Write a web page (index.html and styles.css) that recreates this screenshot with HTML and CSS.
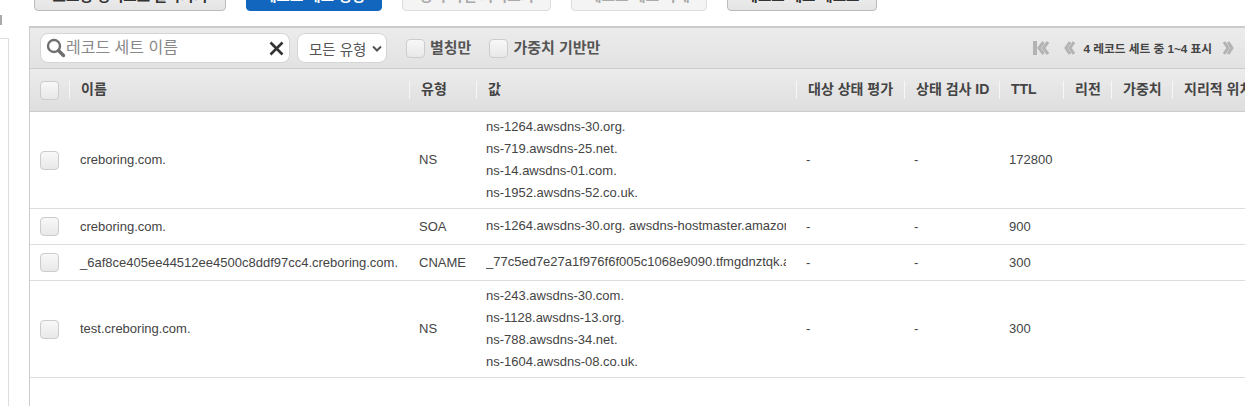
FILE: index.html
```html
<!DOCTYPE html>
<html lang="ko">
<head>
    <link rel="stylesheet" href="styles.css">
    <meta charset="utf-8" />
    <title>Route 53</title>
</head>
<body>

<div class="page">
    <!-- Left nav panel, mostly cut off -->
    <aside class="side">
        <div class="side-tick"></div>
        <div class="side-panel"></div>
    </aside>

    <div class="content">
        <!-- Action buttons, top of them is out of view -->
        <div class="actions">
            <button class="btn btn-back">호스팅 영역으로 돌아가기</button>
            <button class="btn btn-primary">레코드 세트 생성</button>
            <button class="btn btn-import" disabled>영역 파일 가져오기</button>
            <button class="btn btn-delete" disabled>레코드 세트 삭제</button>
            <button class="btn btn-test">레코드 세트 테스트</button>
        </div>

        <div class="record-box">
            <div class="toolbar">
                <div class="search">
                    <svg class="search-icon" width="20" height="20" viewBox="0 0 20 20">
                        <circle cx="8" cy="8" r="6" fill="none" stroke="#6f6f6f" stroke-width="2.4"/>
                        <path d="M12.5 12.5L17.5 17.5" stroke="#6f6f6f" stroke-width="3.4" stroke-linecap="round"/>
                    </svg>
                    <span class="search-text">레코드 세트 이름</span>
                    <svg class="clear-icon" width="15" height="15" viewBox="0 0 15 15">
                        <path d="M1.5 1.5L13.5 13.5M13.5 1.5L1.5 13.5" stroke="#333" stroke-width="2.6"/>
                    </svg>
                </div>
                <div class="type-select">
                    <span>모든 유형</span>
                    <svg width="10" height="7" viewBox="0 0 10 7">
                        <path d="M1 1.5L5 5.5L9 1.5" fill="none" stroke="#555" stroke-width="2"/>
                    </svg>
                </div>
                <label class="check-label"><span class="check"></span>별칭만</label>
                <label class="check-label"><span class="check"></span>가중치 기반만</label>

                <div class="pager">
                    <svg class="pager-first" width="16" height="14" viewBox="0 0 16 14">
                        <path d="M0 0H4V14H0Z" fill="#b3b3b3"/>
                        <path d="M10.5 1L6 7L10.5 13M15 1L10.5 7L15 13" fill="none" stroke="#b3b3b3" stroke-width="3"/>
                    </svg>
                    <svg class="pager-prev" width="11" height="14" viewBox="0 0 11 14">
                        <path d="M6 1L2 7L6 13M10 1L6 7L10 13" fill="none" stroke="#b3b3b3" stroke-width="3"/>
                    </svg>
                    <span class="pager-text">4 레코드 세트 중 1~4 표시</span>
                    <svg class="pager-next" width="11" height="14" viewBox="0 0 11 14">
                        <path d="M1 1L5 7L1 13M5 1L9 7L5 13" fill="none" stroke="#b3b3b3" stroke-width="3"/>
                    </svg>
                </div>
            </div>

            <table class="records">
                <colgroup>
                    <col class="col-check">
                    <col class="col-name">
                    <col class="col-type">
                    <col class="col-value">
                    <col class="col-health">
                    <col class="col-check-id">
                    <col class="col-ttl">
                    <col class="col-region">
                    <col class="col-weight">
                    <col class="col-geo">
                </colgroup>
                <thead>
                    <tr>
                        <th class="cell-check"><span class="check"></span></th>
                        <th><span class="th-in">이름</span></th>
                        <th><span class="th-in">유형</span></th>
                        <th><span class="th-in">값</span></th>
                        <th><span class="th-in">대상 상태 평가</span></th>
                        <th><span class="th-in">상태 검사 ID</span></th>
                        <th><span class="th-in">TTL</span></th>
                        <th><span class="th-in">리전</span></th>
                        <th><span class="th-in">가중치</span></th>
                        <th><span class="th-in">지리적 위치</span></th>
                    </tr>
                </thead>
                <tbody>
                    <tr class="tall">
                        <td class="cell-check"><span class="check"></span></td>
                        <td class="name">creboring.com.</td>
                        <td>NS</td>
                        <td class="value"><div>ns-1264.awsdns-30.org.</div><div>ns-719.awsdns-25.net.</div><div>ns-14.awsdns-01.com.</div><div>ns-1952.awsdns-52.co.uk.</div></td>
                        <td>-</td>
                        <td>-</td>
                        <td>172800</td>
                        <td></td><td></td><td></td>
                    </tr>
                    <tr>
                        <td class="cell-check"><span class="check"></span></td>
                        <td class="name">creboring.com.</td>
                        <td>SOA</td>
                        <td class="value"><div>ns-1264.awsdns-30.org. awsdns-hostmaster.amazon.com. 1 7200 900 1209600 86400</div></td>
                        <td>-</td>
                        <td>-</td>
                        <td>900</td>
                        <td></td><td></td><td></td>
                    </tr>
                    <tr>
                        <td class="cell-check"><span class="check"></span></td>
                        <td class="name">_6af8ce405ee44512ee4500c8ddf97cc4.creboring.com.</td>
                        <td>CNAME</td>
                        <td class="value"><div>_77c5ed7e27a1f976f6f005c1068e9090.tfmgdnztqk.acm-validations.aws.</div></td>
                        <td>-</td>
                        <td>-</td>
                        <td>300</td>
                        <td></td><td></td><td></td>
                    </tr>
                    <tr class="tall">
                        <td class="cell-check"><span class="check"></span></td>
                        <td class="name">test.creboring.com.</td>
                        <td>NS</td>
                        <td class="value"><div>ns-243.awsdns-30.com.</div><div>ns-1128.awsdns-13.org.</div><div>ns-788.awsdns-34.net.</div><div>ns-1604.awsdns-08.co.uk.</div></td>
                        <td>-</td>
                        <td>-</td>
                        <td>300</td>
                        <td></td><td></td><td></td>
                    </tr>
                </tbody>
            </table>
        </div>
    </div>
</div>

</body>
</html>
```

FILE: styles.css
```css
html, body {
    margin: 0;
    height: 100%;
    overflow: hidden;
    background: #fff;
}

body {
    font-family: "Liberation Sans", "Noto Sans CJK KR", sans-serif;
    font-size: 13px;
    color: #444;
}

.page {
    display: flex;
    height: 406px;
    overflow: hidden;
}

.side {
    width: 9px;
    flex-shrink: 0;
}

.side-tick {
    width: 2px;
    height: 10px;
    margin-top: 15px;
    background: #aaa;
}

.side-panel {
    height: 368px;
    margin-top: 13px;
    border-top: 1px solid #ddd;
    border-right: 1px solid #ddd;
}

.content {
    margin-left: 20px;
    flex: 1;
    min-width: 0;
}

.actions {
    display: flex;
    height: 11px;
    align-items: flex-end;
    padding-left: 5px;
}

.btn {
    height: 34px;
    flex-shrink: 0;
    padding: 0;
    font-family: inherit;
    font-size: 14.5px;
    font-weight: bold;
    color: #333;
    background: linear-gradient(#f6f6f6, #e4e4e4);
    border: 1px solid #bbb;
    border-radius: 4px;
}

.btn[disabled] {
    color: #aaa;
    background: #f4f4f4;
    border-color: #ddd;
}

.btn-back { width: 192px; margin-right: 20px; }
.btn-primary { width: 136px; margin-right: 20px; color: #fff; background: #1266bd; border-color: #1266bd; }
.btn-import { width: 149px; margin-right: 20px; }
.btn-delete { width: 136px; margin-right: 20px; }
.btn-test { width: 150px; }

.record-box {
    margin-top: 15px;
    border-top: 2px solid #ccc;
    border-left: 1px solid #ccc;
    height: 400px;
}

.toolbar {
    display: flex;
    align-items: center;
    height: 40px;
    padding-left: 10px;
    background: linear-gradient(#ececec, #e2e2e2);
    border-bottom: 1px solid #ccc;
}

.search {
    display: flex;
    align-items: center;
    box-sizing: border-box;
    width: 250px;
    height: 30px;
    background: #fff;
    border: 1px solid #d5d5d5;
    border-radius: 8px;
    margin-right: 7px;
}

.search-icon {
    margin-left: 5px;
}

.search-text {
    flex: 1;
    font-size: 16px;
    line-height: 24px;
    margin-bottom: 1px;
    color: #888;
}

.clear-icon {
    margin-right: 5px;
}

.type-select {
    display: flex;
    align-items: center;
    justify-content: space-between;
    box-sizing: border-box;
    width: 90px;
    height: 30px;
    padding: 0 4px 0 11px;
    background: #fff;
    border: 1px solid #d5d5d5;
    border-radius: 8px;
    font-size: 14.5px;
    color: #555;
    margin-right: 19px;
}

.check {
    display: inline-block;
    box-sizing: border-box;
    width: 19px;
    height: 19px;
    flex-shrink: 0;
    vertical-align: middle;
    background: linear-gradient(#f8f8f8, #e8e8e8);
    border: 1px solid #ccc;
    border-radius: 4px;
}

.check-label {
    display: flex;
    align-items: center;
    gap: 5px;
    font-size: 15px;
    font-weight: bold;
    color: #555;
    margin-right: 18px;
    line-height: 20px;
}

.pager {
    display: flex;
    align-items: center;
    margin-left: auto;
    margin-right: 11px;
}

.pager-first { margin-right: 15px; }
.pager-prev { margin-right: 8px; }
.pager-next { margin-left: 11px; }

.pager-text {
    font-size: 11.7px;
    font-weight: bold;
    color: #444;
    margin-bottom: 2px;
}

.records {
    table-layout: fixed;
    border-collapse: collapse;
    width: 1216px;
}

.col-check { width: 39px; }
.col-name { width: 340px; }
.col-type { width: 67px; }
.col-value { width: 320px; }
.col-health { width: 108px; }
.col-check-id { width: 95px; }
.col-ttl { width: 64px; }
.col-region { width: 48px; }
.col-weight { width: 61px; }
.col-geo { width: 74px; }

.records th {
    height: 42px;
    padding: 0;
    text-align: left;
    font-size: 14px;
    font-weight: bold;
    color: #444;
    white-space: nowrap;
    overflow: hidden;
    background: linear-gradient(#ececec, #dedede);
    border-bottom: 1px solid #ccc;
}

.th-in {
    display: block;
    height: 18px;
    line-height: 16px;
    padding-left: 11px;
    border-left: 1px solid #f6f6f6;
}

.records td {
    box-sizing: border-box;
    padding: 0 0 0 10px;
    font-size: 13px;
    color: #444;
    white-space: nowrap;
    border-bottom: 1px solid #ddd;
    height: 36px;
}

.records .tall td {
    padding-bottom: 2px;
}

.records th.cell-check, .records td.cell-check {
    padding: 0 0 0 10px;
}

.records td.name {
    padding-left: 11px;
}

.records td.value {
    padding: 3px 10px 5px 10px;
    overflow: hidden;
}

.records .tall td.value {
    padding: 4px 10px;
}

.value div {
    line-height: 22px;
    overflow: hidden;
}
```
